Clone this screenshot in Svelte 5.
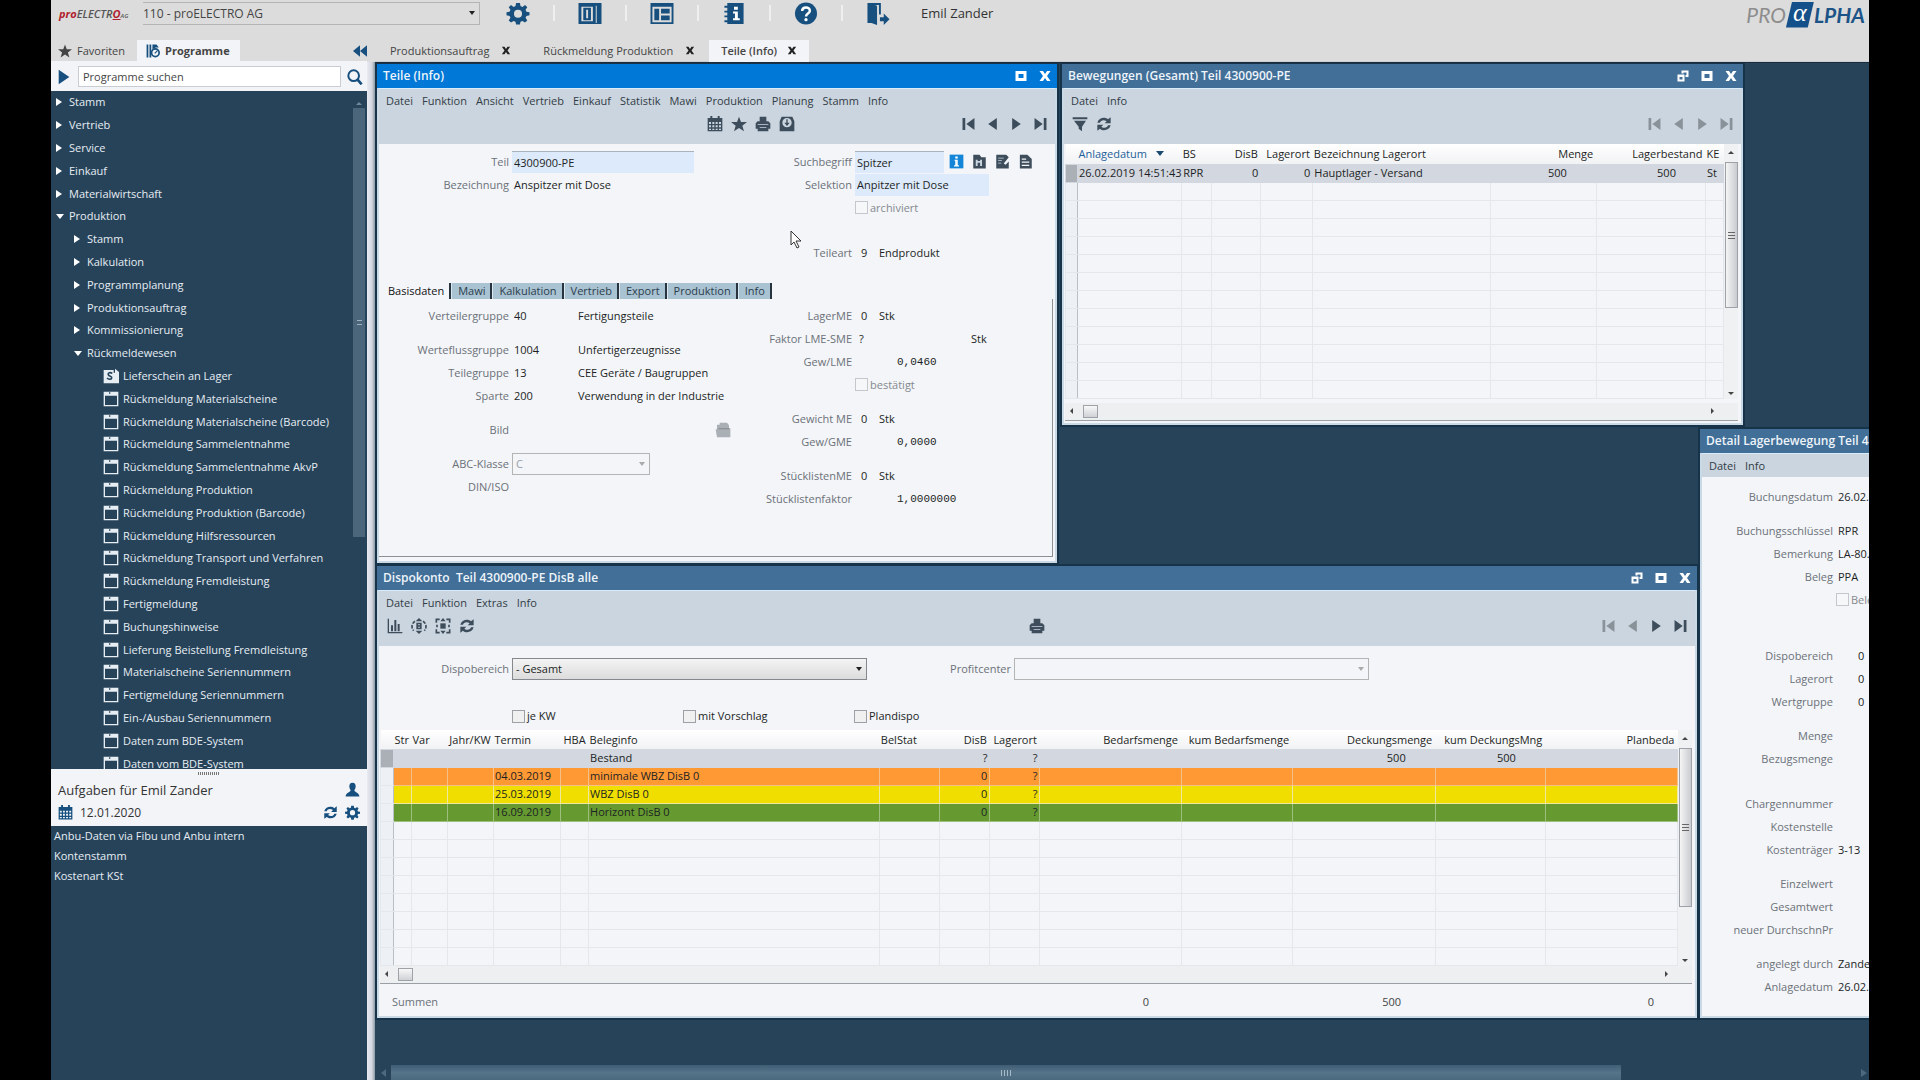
<script>
  const branches = [
    { level: 0, label: 'Stamm' },
    { level: 0, label: 'Vertrieb' },
    { level: 0, label: 'Service' },
    { level: 0, label: 'Einkauf' },
    { level: 0, label: 'Materialwirtschaft' },
    { level: 0, label: 'Produktion', open: true },
    { level: 1, label: 'Stamm' },
    { level: 1, label: 'Kalkulation' },
    { level: 1, label: 'Programmplanung' },
    { level: 1, label: 'Produktionsauftrag' },
    { level: 1, label: 'Kommissionierung' },
    { level: 1, label: 'Rückmeldewesen', open: true }
  ];
  const leaves = [
    'Lieferschein an Lager', 'Rückmeldung Materialscheine', 'Rückmeldung Materialscheine (Barcode)',
    'Rückmeldung Sammelentnahme', 'Rückmeldung Sammelentnahme AkvP', 'Rückmeldung Produktion',
    'Rückmeldung Produktion (Barcode)', 'Rückmeldung Hilfsressourcen', 'Rückmeldung Transport und Verfahren',
    'Rückmeldung Fremdleistung', 'Fertigmeldung', 'Buchungshinweise', 'Lieferung Beistellung Fremdleistung',
    'Materialscheine Seriennummern', 'Fertigmeldung Seriennummern', 'Ein-/Ausbau Seriennummern',
    'Daten zum BDE-System', 'Daten vom BDE-System'
  ];
  const mainTools = [
    ['gear', 'Einstellungen'], ['panel', 'Seitenleiste'], ['layout', 'Layout'],
    ['book', 'Information'], ['help', 'Hilfe'], ['exit', 'Abmelden']
  ];
  const partMenu = ['Datei', 'Funktion', 'Ansicht', 'Vertrieb', 'Einkauf', 'Statistik', 'Mawi', 'Produktion', 'Planung', 'Stamm', 'Info'];
  const partTabs = ['Basisdaten', 'Mawi', 'Kalkulation', 'Vertrieb', 'Export', 'Produktion', 'Info'];

  const moveCols = [
    { w: 12, t: '' }, { w: 104, t: 'Anlagedatum', sort: true }, { w: 30, t: 'BS' }, { w: 49, t: 'DisB', r: true },
    { w: 52, t: 'Lagerort', r: true }, { w: 177, t: 'Bezeichnung Lagerort' }, { w: 106, t: 'Menge', r: true, num: true },
    { w: 109, t: 'Lagerbestand', r: true, num: true }, { w: 18, t: 'KE' }
  ];
  const moveRows = [{ cells: ['', '26.02.2019 14:51:43', 'RPR', '0', '0', 'Hauptlager - Versand', '500', '500', 'St'], tone: 'selected' }];

  const dispoCols = [
    { w: 13, t: '' }, { w: 18, t: 'Str' }, { w: 36, t: 'Var' }, { w: 46, t: 'Jahr/KW', r: true }, { w: 67, t: 'Termin' },
    { w: 28, t: 'HBA', r: true }, { w: 291, t: 'Beleginfo' }, { w: 60, t: 'BelStat' }, { w: 50, t: 'DisB', r: true },
    { w: 50, t: 'Lagerort', r: true }, { w: 141, t: 'Bedarfsmenge', r: true, num: true }, { w: 111, t: 'kum Bedarfsmenge', r: true, num: true },
    { w: 143, t: 'Deckungsmenge', r: true, num: true }, { w: 110, t: 'kum DeckungsMng', r: true, num: true }, { w: 132, t: 'Planbeda', r: true }
  ];
  const dispoRows = [
    { tone: 'selected', cells: ['', '', '', '', '', '', 'Bestand', '', '?', '?', '', '', '500', '500', ''] },
    { tone: 'orange', cells: ['', '', '', '', '04.03.2019', '', 'minimale WBZ DisB 0', '', '0', '?', '', '', '', '', ''] },
    { tone: 'yellow', cells: ['', '', '', '', '25.03.2019', '', 'WBZ DisB 0', '', '0', '?', '', '', '', '', ''] },
    { tone: 'green', cells: ['', '', '', '', '16.09.2019', '', 'Horizont DisB 0', '', '0', '?', '', '', '', '', ''] }
  ];

  const detail = [
    [['Buchungsdatum', '26.02.2019']],
    [['Buchungsschlüssel', 'RPR'], ['Bemerkung', 'LA-80.'], ['Beleg', 'PPA'], ['', 'check']],
    [['Dispobereich', '0', true], ['Lagerort', '0', true], ['Wertgruppe', '0', true]],
    [['Menge', ''], ['Bezugsmenge', '']],
    [['Chargennummer', ''], ['Kostenstelle', ''], ['Kostenträger', '3-13']],
    [['Einzelwert', ''], ['Gesamtwert', ''], ['neuer DurchschnPr', '']],
    [['angelegt durch', 'Zander'], ['Anlagedatum', '26.02.2019']]
  ];
  const detailGap = ['', 'g11', 'g33', 'g11', 'g22', 'g11', 'g11'];
</script>

{#snippet icon(name)}
  <svg class="ic" viewBox="0 0 24 24" aria-hidden="true">
    {#if name === 'gear'}
      <path fill-rule="evenodd" d="M10 1h4l.6 3.2 2 .9L19.400 3.200l2.300 2.300-1.800 2.700.9 2L24 10.700v3.100l-3.200.7-.9 2 1.800 2.700-2.400 2.300-2.700-1.800-2 .8L14 23.500h-4l-.6-3-2-.8-2.700 1.800-2.400-2.300 1.800-2.700-.9-2L0 13.800v-3.100l3.200-.5.9-2-1.800-2.700 2.400-2.300 2.700 1.900 2-.9zM12 8a4.200 4.200 0 1 0 0 8.400A4.200 4.200 0 0 0 12 8z" />
    {:else if name === 'panel'}
      <path fill-rule="evenodd" d="M0 1h24v22H0zM3 5v15h12V5zM18 4v18h1V4z" /><path fill-rule="evenodd" d="M5 6h8v13H5zM8 8v9h2V8z" />
    {:else if name === 'layout'}
      <path fill-rule="evenodd" d="M0 1h24v22H0zM2 5v16h20V5z" /><path d="M4 7h5v12H4zM11 7h9v5h-9zM11 14h9v5h-9z" />
    {:else if name === 'book'}
      <path d="M5 1h17v22H5zM2 4h5v2H2zM2 9h5v2H2zM2 14h5v2H2zM2 19h5v2H2z" /><path d="M12 5h4v3h-4zM11 10h5v7h2v2h-7v-2h2v-5h-2z" fill="#fff" />
    {:else if name === 'help'}
      <circle cx="12" cy="12" r="11.500" /><path d="M8 9.500C8 4.500 16 4.500 16 9c0 3-4 3-4 6" fill="none" stroke="#fff" stroke-width="2.600" /><circle cx="12" cy="18.500" r="1.700" fill="#fff" />
    {:else if name === 'exit'}
      <path d="M1 1h12v2H9v19H1z" /><path d="M3 1l8 3v20l-8-3z" /><path d="M12 1h3v12h-2V3h-4z" /><path d="M14 16h4v-4l6 6-6 6v-4h-4z" />
    {:else if name === 'star'}
      <path d="M12 1l3 8h9l-7 5.500 2.500 8.500L12 18l-7.500 5L7 14.500 0 9h9z" />
    {:else if name === 'programs'}
      <path d="M1 1h3v22H1zM6 1h3v22H6z" /><circle cx="16" cy="15" r="6.500" fill="none" stroke="currentColor" stroke-width="3" /><path d="M11 1h7l4 5h-5l-6 3z" /><path d="M15 16l5-5" stroke="currentColor" stroke-width="2" />
    {:else if name === 'play'}
      <path d="M4 1l16 11L4 23z" />
    {:else if name === 'back'}
      <path d="M20 1L4 12l16 11z" />
    {:else if name === 'first'}
      <path d="M1 1h5v22H1zM23 1L8 12l15 11z" />
    {:else if name === 'last'}
      <path d="M18 1h5v22h-5zM1 1l15 11L1 23z" />
    {:else if name === 'collapse'}
      <path d="M12 2v20L0 12zM24 2v20L12 12z" />
    {:else if name === 'search'}
      <circle cx="10" cy="10" r="8" fill="none" stroke="currentColor" stroke-width="3" /><path d="M15 15l7 8" stroke="currentColor" stroke-width="4" />
    {:else if name === 'calendar'}
      <path fill-rule="evenodd" d="M1 3h4V0h3v3h8V0h3v3h4v20H1zM3 9v3h3V9zm5 0v3h3V9zm5 0v3h3V9zm5 0v3h3V9zM3 14v3h3v-3zm5 0v3h3v-3zm5 0v3h3v-3zm5 0v3h3v-3zM3 19v2h3v-2zm5 0v2h3v-2zm5 0v2h3v-2zm5 0v2h3v-2z" />
    {:else if name === 'printer'}
      <path d="M7 1h10v7h3l3 3v8h-3v4H4v-4H1v-8l3-3h3z" /><path d="M4 12h16v1H4zM7 17h10v1H7z" fill="#cad5df" />
    {:else if name === 'safe'}
      <path fill-rule="evenodd" d="M4 1h16l3 7v15H1V8zM12 3a7 7 0 1 0 0 14 7 7 0 0 0 0-14z" /><path d="M11 5h2v5h3l-4 5-4-5h3z" />
    {:else if name === 'filter'}
      <path d="M1 2h22v3H1zM3 7h18l-6 9v7l-5-4v-3z" />
    {:else if name === 'refresh'}
      <path d="M2 10C4 2 14 1 18 5l4-3v9h-9l3-3C12 5 7 6 6 10zM22 14c-2 8-12 9-16 5l-4 3v-9h9l-3 3c4 3 9 2 10-2z" />
    {:else if name === 'chart'}
      <path d="M1 1h2v20h20v2H1zM6 11h3v9H6zM11 3h3v17h-3zM16 9h3v11h-3z" />
    {:else if name === 'target'}
      <path fill-rule="evenodd" d="M8 7h8v10H8zM11 9v2h2V9zm0 4v2h2v-2z" /><path d="M12 0l5 5H7zM12 24l5-5H7z" /><path d="M6 5a9 9 0 0 0-2 14M18 5a9 9 0 0 1 2 14" fill="none" stroke="currentColor" stroke-width="2.500" stroke-dasharray="5 2" />
    {:else if name === 'spread'}
      <path d="M8 8h8v8H8z" /><path d="M12 0l4 5H8zM12 24l4-5H8z" /><path d="M2 7V2h5M17 2h5v5M2 17v5h5M17 22h5v-5M3 10v4M21 10v4" fill="none" stroke="currentColor" stroke-width="2.500" />
    {:else if name === 'person'}
      <path d="M12 1c4 0 5.500 3 5 7-.4 3-1.500 4-2 5 0 3 8 4 8 10H1c0-6 8-7 8-10-.5-1-1.600-2-2-5-.5-4 1-7 5-7z" />
    {:else if name === 'info'}
      <path d="M1 1h22v22H1z" /><path d="M10 4h4v3h-4zM9 9h5v9h2v2H8v-2h2v-7H9z" fill="#fff" />
    {:else if name === 'find'}
      <path d="M2 1h10l3 4h7v18H2z" /><path d="M6 9h3v10H6zM13 9h3v10h-3zM9 11h4v3H9z" fill="#cad5df" />
    {:else if name === 'edit'}
      <path d="M2 1h16l4 4-8 10 3 2 5-5v11H2z" /><path d="M5 6h9v1H5zM5 10h6v1H5zM5 14h5v1H5z" fill="#cad5df" />
    {:else if name === 'doc'}
      <path d="M3 1h12l7 7v15H3z" /><path d="M6 7h7v2H6zM6 12h12v2H6zM6 17h12v2H6z" fill="#f3f5f9" />
    {:else if name === 'folder'}
      <path d="M3 4h4V1h11l3 4v4h2v14H3L1 11h2z" opacity=".7" /><path d="M5 9h16v2H5z" />
    {:else if name === 'window'}
      <path fill-rule="evenodd" d="M1 1h22v22H1zM3 7v14h18V7z" /><path d="M9 2h2v2H9z" fill="#26435a" />
    {:else if name === 'scan'}
      <path d="M1 3h15v4h2V1l6 5v17H1z" /><path d="M14 8c-3-2-7-1-6 2s6 2 5 5-5 2-7 0" fill="none" stroke="#26435a" stroke-width="2.500" />
    {:else if name === 'restore'}
      <path fill-rule="evenodd" d="M1 9h14v14H1zM5 14v5h6v-5z" /><path d="M9 1h14v13h-6v-4h2V5h-6v2H9z" />
    {:else if name === 'maximize'}
      <path fill-rule="evenodd" d="M1 2h22v20H1zM7 8v8h10V8z" />
    {:else if name === 'close'}
      <path d="M1 2h7l4 6 4-6h7l-7 10 7 10h-7l-4-6-4 6H1l7-10z" />
    {/if}
  </svg>
{/snippet}

{#snippet ib(name, label, extra = '')}
  <button type="button" class="ib {extra}" aria-label={label}>{@render icon(name)}</button>
{/snippet}

{#snippet titlebar(text, restore)}
  <header class="title">
    <h2>{text}</h2>
    {#if restore}{@render ib('restore', 'Lösen')}{/if}
    {@render ib('maximize', 'Maximieren')}
    {@render ib('close', 'Schließen')}
  </header>
{/snippet}

{#snippet menubar(items)}
  <nav class="menu">
    {#each items as item}<button type="button">{item}</button>{/each}
  </nav>
{/snippet}

{#snippet navset(a, b)}
  <div class="tools nav">
    {@render ib('first', 'Erster', a)}{@render ib('back', 'Zurück', a)}{@render ib('play', 'Weiter', b)}{@render ib('last', 'Letzter', b)}
  </div>
{/snippet}

{#snippet grid(cols, rows, empty)}
  <table>
    <colgroup>{#each cols as c}<col style="width:{c.w}px" />{/each}</colgroup>
    <thead>
      <tr>{#each cols as c}<th class:r={c.r} class:sort={c.sort}>{c.t}{#if c.sort}<span class="caret"></span>{/if}</th>{/each}</tr>
    </thead>
    <tbody>
      {#each rows as row}
        <tr class={row.tone}>{#each row.cells as cell, i}<td class:r={cols[i].r} class:num={cols[i].num}>{cell}</td>{/each}</tr>
      {/each}
      {#each Array(empty) as _}
        <tr>{#each cols as c}<td></td>{/each}</tr>
      {/each}
    </tbody>
  </table>
{/snippet}

{#snippet gridframe(cols, rows, empty)}
  <div class="gridframe">
    <div class="gridbody">
      {@render grid(cols, rows, empty)}
      <div class="vbar"><i class="tri up"></i><span class="thumb"><b></b></span><i class="tri down"></i></div>
    </div>
    <div class="hbar"><i class="tri left"></i><span class="thumb"></span><i class="tri right"></i></div>
  </div>
{/snippet}

<div class="screen">
  <div class="app">
    <header class="topbar">
      <div class="brand"><span>pro</span>ELECTR<em>O</em><small>AG</small></div>
      <label class="company combo"><select aria-label="Firma"><option>110 - proELECTRO AG</option></select></label>
      <div class="maintools">
        {#each mainTools as [name, label]}
          {@render ib(name, label, 'big')}
        {/each}
      </div>
      <span class="user">Emil Zander</span>
      <div class="alpha"><span>PRO</span><b>α</b><strong>LPHA</strong></div>
    </header>

    <div class="body">
      <aside class="side">
        <div class="sidetabs">
          <button type="button" class="fav">{@render icon('star')}Favoriten</button>
          <button type="button" class="active">{@render icon('programs')}Programme</button>
          {@render ib('collapse', 'Einklappen')}
        </div>
        <form class="search">
          {@render ib('play', 'Starten')}
          <input type="text" aria-label="Programme suchen" placeholder="Programme suchen" />
          {@render ib('search', 'Suchen')}
        </form>
        <div class="treebox">
          <ul class="tree">
            {#each branches as b}
              <li class="l{b.level}"><button type="button"><i class="tri {b.open ? 'down' : 'right'}"></i>{b.label}</button></li>
            {/each}
            {#each leaves as leaf, i}
              <li class="l2"><button type="button">{@render icon(i === 0 ? 'scan' : 'window')}{leaf}</button></li>
            {/each}
          </ul>
          <div class="sidebar"><i class="tri up"></i><span><b></b></span></div>
        </div>
        <section class="tasks">
          <div class="dots"></div>
          <div class="line"><h2>Aufgaben für Emil Zander</h2>{@render ib('person', 'Benutzer')}</div>
          <div class="line">{@render icon('calendar')}<time>12.01.2020</time>{@render ib('refresh', 'Aktualisieren')}{@render ib('gear', 'Einstellungen')}</div>
        </section>
        <ul class="tasklist">
          <li><a href="#anbu">Anbu-Daten via Fibu und Anbu intern</a></li>
          <li><a href="#konten">Kontenstamm</a></li>
          <li><a href="#kosten">Kostenart KSt</a></li>
        </ul>
      </aside>
      <div class="splitter"></div>

      <div class="work">
        <nav class="doctabs">
          <div class="first">Produktionsauftrag{@render ib('close', 'Schließen')}</div>
          <div>Rückmeldung Produktion{@render ib('close', 'Schließen')}</div>
          <div class="active">Teile (Info){@render ib('close', 'Schließen')}</div>
        </nav>

        <main class="desktop">
          <section class="win part">
            {@render titlebar('Teile (Info)', false)}
            <div class="bar">
              {@render menubar(partMenu)}
              <div class="toolrow">
                <div class="tools shifted">{@render ib('calendar', 'Kalender')}{@render ib('star', 'Favorit')}{@render ib('printer', 'Drucken')}{@render ib('safe', 'Ablage')}</div>
                {@render navset('', '')}
              </div>
            </div>
            <div class="form head">
              <div class="col">
                <div class="row"><label for="teil">Teil</label><input id="teil" class="hl long" value="4300900-PE" /></div>
                <div class="row"><label for="bez">Bezeichnung</label><output id="bez" class="val">Anspitzer mit Dose</output></div>
              </div>
              <div class="col right">
                <div class="row"><label for="such">Suchbegriff</label><input id="such" class="hl short" value="Spitzer" />
                  <span class="rowicons">{@render ib('info', 'Info', 'blue')}{@render ib('find', 'Suchen')}{@render ib('edit', 'Bearbeiten')}{@render ib('doc', 'Dokument')}</span>
                </div>
                <div class="row"><label for="sel">Selektion</label><input id="sel" class="hl mid" value="Anpitzer mit Dose" /></div>
                <div class="row"><span class="lab"></span><label class="check off"><input type="checkbox" disabled />archiviert</label></div>
                <div class="row g22"><span class="lab">Teileart</span><span class="key">9</span><span>Endprodukt</span></div>
              </div>
            </div>
            <div class="tabs">
              {#each partTabs as t, i}<button type="button" class:on={i === 0}>{t}</button>{/each}
            </div>
            <div class="form base">
              <div class="col">
                <div class="row"><span class="lab">Verteilergruppe</span><span class="code">40</span><span>Fertigungsteile</span></div>
                <div class="row g11"><span class="lab">Werteflussgruppe</span><span class="code">1004</span><span>Unfertigerzeugnisse</span></div>
                <div class="row"><span class="lab">Teilegruppe</span><span class="code">13</span><span>CEE Geräte / Baugruppen</span></div>
                <div class="row"><span class="lab">Sparte</span><span class="code">200</span><span>Verwendung in der Industrie</span></div>
                <div class="row g11"><span class="lab">Bild</span><span class="picture">{@render ib('folder', 'Bild öffnen', 'dim')}</span></div>
                <div class="row g11"><label for="abc">ABC-Klasse</label><span class="combo off abc"><select id="abc" disabled><option>C</option></select></span></div>
                <div class="row"><span class="lab">DIN/ISO</span></div>
              </div>
              <div class="col right">
                <div class="row"><span class="lab">LagerME</span><span class="key">0</span><span>Stk</span></div>
                <div class="row"><span class="lab">Faktor LME-SME</span><span class="factor">?</span><span>Stk</span></div>
                <div class="row"><span class="lab">Gew/LME</span><span class="mono">0,0460</span></div>
                <div class="row"><span class="lab"></span><label class="check off"><input type="checkbox" disabled />bestätigt</label></div>
                <div class="row g11"><span class="lab">Gewicht ME</span><span class="key">0</span><span>Stk</span></div>
                <div class="row"><span class="lab">Gew/GME</span><span class="mono">0,0000</span></div>
                <div class="row g11"><span class="lab">StücklistenME</span><span class="key">0</span><span>Stk</span></div>
                <div class="row"><span class="lab">Stücklistenfaktor</span><span class="mono">1,0000000</span></div>
              </div>
            </div>
          </section>

          <section class="win moves">
            {@render titlebar('Bewegungen (Gesamt) Teil 4300900-PE', true)}
            <div class="bar">
              {@render menubar(['Datei', 'Info'])}
              <div class="toolrow">
                <div class="tools">{@render ib('filter', 'Filter')}{@render ib('refresh', 'Aktualisieren')}</div>
                {@render navset('dim', 'dim')}
              </div>
            </div>
            {@render gridframe(moveCols, moveRows, 12)}
          </section>

          <section class="win dispo">
            {@render titlebar('Dispokonto  Teil 4300900-PE DisB alle', true)}
            <div class="bar">
              {@render menubar(['Datei', 'Funktion', 'Extras', 'Info'])}
              <div class="toolrow thirds">
                <div class="tools">{@render ib('chart', 'Diagramm')}{@render ib('target', 'Zentrieren')}{@render ib('spread', 'Ausrichten')}{@render ib('refresh', 'Aktualisieren')}</div>
                <div class="tools">{@render ib('printer', 'Drucken')}</div>
                {@render navset('dim', '')}
              </div>
            </div>
            <div class="filters">
              <label for="bereich">Dispobereich</label><span class="combo strong"><select id="bereich"><option>- Gesamt</option></select></span>
              <label for="profit">Profitcenter</label><span class="combo off"><select id="profit" disabled><option></option></select></span>
            </div>
            <div class="checks">
              <label class="check"><input type="checkbox" />je KW</label>
              <label class="check"><input type="checkbox" />mit Vorschlag</label>
              <label class="check"><input type="checkbox" />Plandispo</label>
            </div>
            {@render gridframe(dispoCols, dispoRows, 8)}
            <footer class="sums"><span>Summen</span><span>0</span><span>500</span><span>0</span></footer>
          </section>

          <section class="win detail">
            <header class="title"><h2>Detail Lagerbewegung Teil 4300900-PE</h2></header>
            <div class="bar">{@render menubar(['Datei', 'Info'])}</div>
            <div class="form">
              <div class="col">
                {#each detail as group, g}
                  {#each group as [name, value, indent], i}
                    <div class="row {i === 0 ? detailGap[g] : ''}">
                      <span class="lab">{name}</span>
                      {#if value === 'check'}<label class="check off"><input type="checkbox" disabled />Beleg</label>
                      {:else}<span class="val" class:indent>{value}</span>{/if}
                    </div>
                  {/each}
                {/each}
              </div>
            </div>
          </section>

          <svg class="cursor" viewBox="0 0 12 19" aria-hidden="true"><path d="M1 1v14l3-3 3 6 2-1-3-6h5z" fill="#fff" stroke="#333" /></svg>
          <div class="deskbar"><i class="tri left"></i><span><b></b></span><i class="tri right"></i></div>
        </main>
      </div>
    </div>
  </div>
</div>

<style>
  :global(body) { background: #000; overflow: hidden; }
  .screen { height: 100vh; padding: 0 51px; background: #000; font: 11px/16px "Open Sans", "Noto Sans", sans-serif; color: #1c1f24; }
  .screen, .screen * { box-sizing: border-box; }
  .app { height: 100%; display: flex; flex-direction: column; background: #dcdcdc; overflow: hidden; }
  button, input, select { font: inherit; color: inherit; border: 0; background: none; margin: 0; padding: 0; }
  h2 { margin: 0; font: inherit; }
  ul { list-style: none; margin: 0; padding: 0; }
  .ic { width: 16px; height: 16px; fill: currentColor; flex: none; display: block; }
  .ib { flex: none; display: block; color: #3e4d5b; }
  .ib.dim { color: #8a9299; }
  .ib.blue { color: #1585d8; }
  .tri { width: 0; height: 0; flex: none; border: 4px solid transparent; }
  .tri.right { border-left: 6px solid currentColor; border-right: 0; }
  .tri.left { border-right: 5px solid currentColor; border-left: 0; }
  .tri.down { border-top: 5px solid currentColor; border-bottom: 0; }
  .tri.up { border-bottom: 5px solid currentColor; border-top: 0; }

  .topbar { height: 40px; flex: none; display: flex; align-items: flex-start; padding: 0 4px 0 8px; }
  .brand { width: 84px; line-height: 28px; font-size: 11px; font-style: italic; font-weight: 600; color: #555; white-space: nowrap; }
  .brand span { color: #b0202c; font-weight: 700; }
  .brand em { color: #b0202c; font-weight: 700; text-decoration: underline; }
  .brand small { font-size: 6px; }
  .combo { position: relative; display: block; border: 1px solid #b4b4b4; }
  .combo select { appearance: none; width: 100%; height: 100%; display: block; padding: 0 3px; opacity: 1; }
  .combo::after { content: ""; position: absolute; right: 4px; top: 8px; border: 3px solid transparent; border-top: 4px solid #222; border-bottom: 0; pointer-events: none; }
  .combo.off::after { border-top-color: #aaa; }
  .company { width: 337px; height: 23px; margin-top: 2px; border-left: 0; font-size: 12px; color: #444; }
  .company select { padding: 0; }
  .maintools { display: flex; padding: 2px 0 0 26px; }
  .maintools :global(.big) { color: #17507f; width: 24px; margin-right: 48px; position: relative; }
  .maintools :global(.big .ic) { width: 24px; height: 23px; }
  .maintools :global(.big:not(:last-child)::after) { content: ""; position: absolute; left: 47px; top: 3px; width: 2px; height: 16px; background: #efefef; }
  .user { font-size: 13px; line-height: 26px; color: #333; flex: 1; margin-left: -17px; }
  .alpha { display: flex; align-items: center; height: 29px; font: italic 21px/28px Lato, sans-serif; color: #8d8d8d; }
  .alpha b { width: 28px; height: 26px; background: #14508a; color: #fff; clip-path: polygon(22% 0, 100% 0, 78% 100%, 0 100%); text-align: center; font: italic 26px/22px "Liberation Serif", serif; }
  .alpha strong { color: #1c5487; font-weight: 700; }

  .body { flex: 1; display: flex; min-height: 0; }
  .side { width: 316px; flex: none; display: flex; flex-direction: column; background: #26435a; }
  .splitter { width: 8px; flex: none; background: linear-gradient(90deg, #e9ebf2, #d3d7e0 60%, #8e99a6); margin-top: 22px; }
  .sidetabs { height: 22px; flex: none; display: flex; align-items: center; background: #dcdcdc; border-bottom: 1px solid #f3f4f8; padding-left: 7px; color: #444; }
  .sidetabs > button { display: flex; align-items: center; gap: 5px; height: 21px; }
  .sidetabs > button .ic { width: 14px; height: 14px; }
  .fav { width: 79px; }
  .sidetabs > .active { background: #f3f4f8; width: 103px; padding-left: 9px; font-weight: 700; }
  .sidetabs > .active .ic { color: #17507f; }
  .sidetabs > :global(.ib) { margin-left: auto; color: #17507f; }
  .search { height: 29px; flex: none; display: flex; align-items: center; background: #f3f4f8; padding: 0 4px 0 5px; gap: 6px; }
  .search input { flex: 1; height: 21px; border: 1px solid #c9ccd2; background: #fff; padding: 0 4px; min-width: 0; }
  .search input::placeholder { color: #444; opacity: 1; }
  .search :global(.ib) { color: #17507f; }
  .treebox { height: 678px; flex: none; display: flex; overflow: hidden; }
  .tree { flex: 1; height: 684px; display: grid; grid-auto-rows: 1fr; color: #e6edf3; }
  .tree li { display: flex; align-items: center; white-space: nowrap; }
  .tree button { display: flex; align-items: center; gap: 4px; }
  .tree .l0 { padding-left: 5px; }
  .tree .l1 { padding-left: 23px; }
  .tree .l2 { padding-left: 52px; }
  .tree .tri { width: 8px; margin-right: 1px; color: #fff; }
  .tree .tri.right { width: 6px; margin-right: 3px; }
  .sidebar { width: 14px; padding-top: 11px; color: #6f8799; }
  .sidebar .tri { display: block; border-width: 3px; margin: 0 3px 3px; }
  .sidebar .tri.up { border-top-width: 0; }
  .sidebar span { display: grid; place-items: center; width: 12px; height: 429px; background: #4b657a; }
  .sidebar b { width: 5px; height: 5px; border: solid #9fb0be; border-width: 1px 0; }
  .tasks { height: 57px; flex: none; background: #f2f4f8; padding: 3px 7px 0; color: #333; font-size: 13px; }
  .dots { width: 22px; height: 3px; margin: 0 auto 2px; background: repeating-linear-gradient(90deg, #777 0 1px, transparent 1px 2px); }
  .line { display: flex; align-items: center; height: 23px; gap: 7px; color: #17507f; padding-top: 2px; }
  .line h2, .line time { flex: 1; color: #333; }
  .line time { font-size: 12px; }
  .line .ic { width: 15px; height: 15px; }
  .line :global(.ib) { color: #17507f; }
  .tasklist { padding-left: 3px; }
  .tasklist li { height: 20px; line-height: 20px; }
  .tasklist a { color: #e6edf3; text-decoration: none; }

  .work { flex: 1; min-width: 0; display: flex; flex-direction: column; }
  .doctabs { height: 22px; flex: none; display: flex; align-items: center; border-bottom: 1px solid #c9ced8; padding-left: 3px; color: #444; }
  .doctabs div { display: flex; align-items: center; height: 22px; gap: 12px; padding: 0 12px; }
  .doctabs .first { margin-right: 8px; }
  .doctabs .ic { width: 10px; height: 9px; color: #222; }
  .doctabs .active { background: #f3f4f8; font-weight: 600; gap: 10px; margin-left: 2px; }
  .desktop { flex: 1; position: relative; overflow: hidden; background: #26435a; border-top: 1px solid #1b2c3c; }

  .win { position: absolute; background: #f3f5f9; border: 2px solid #c9d9e6; border-top: 0; outline: 2px solid #17334a; display: flex; flex-direction: column; }
  .part { left: 2px; top: 1px; width: 680px; height: 499px; }
  .moves { left: 687px; top: 1px; width: 681px; height: 361px; }
  .dispo { left: 2px; top: 503px; width: 1320px; height: 452px; }
  .detail { left: 1325px; top: 366px; width: 340px; height: 589px; }
  .title { height: 24px; flex: none; display: flex; align-items: center; gap: 12px; margin: 0 -2px; padding: 0 6px; background: #416f98; color: #eef4fa; font-size: 12px; font-weight: 600; white-space: pre; }
  .part .title { background: #0078d7; }
  .title h2 { flex: 1; }
  .title .ic { width: 12px; height: 12px; color: #fff; }
  .bar { flex: none; background: #cad5df; border-top: 1px solid #d9ecfb; }
  .menu { display: flex; height: 23px; align-items: center; gap: 9px; padding-left: 7px; color: #333c45; }
  .menu button { height: 16px; }
  .toolrow { display: flex; justify-content: space-between; align-items: center; height: 24px; padding: 0 8px; margin-bottom: 8px; }
  .thirds { display: grid; grid-template-columns: 1fr auto 1fr; }
  .tools { display: flex; gap: 8px; }
  .tools.shifted { padding-left: 320px; }
  .nav { gap: 11px; justify-content: flex-end; }
  .nav .ic { width: 13px; height: 14px; }

  .form { display: flex; }
  .row { display: flex; align-items: center; height: 23px; white-space: nowrap; }
  .row > * { flex: none; }
  .row > label:first-child, .row > .lab { width: 130px; text-align: right; margin-right: 3px; color: #6c7178; }
  .row.g11 { margin-top: 11px; }
  .row.g22 { margin-top: 22px; }
  .row.g33 { margin-top: 33px; }
  .part .right .row > label:first-child, .part .right .row > .lab { width: 148px; }
  .head { padding-top: 6px; height: 139px; }
  .part .col:first-child { width: 342px; flex: none; }
  .part .col.right { margin-left: -17px; }
  .hl { background: #dceafb; height: 22px; padding: 0 2px; }
  .long { width: 182px; border-top: 1px solid #a9b3be; }
  .short { width: 89px; border-top: 1px solid #a9b3be; }
  .mid { width: 134px; }
  .rowicons { display: flex; gap: 8px; padding-left: 5px; }
  .rowicons .ic { width: 15px; height: 15px; }
  .val { padding-left: 2px; }
  .key { width: 24px; padding-left: 6px; }
  .code { width: 66px; padding-left: 2px; }
  .factor { width: 116px; padding-left: 4px; }
  .picture { padding-left: 203px; }
  .mono { font-family: "Liberation Mono", monospace; padding-left: 42px; }
  .abc { width: 138px; height: 22px; color: #9aa0a6; }
  .check { display: flex; align-items: center; gap: 2px; }
  .check input { appearance: none; width: 13px; height: 13px; border: 1px solid #9da1a6; background: #f0f0f0; }
  .check.off { color: #85898e; }
  .check.off input { border-color: #c4c7cb; background: #f6f7f9; }
  .tabs { display: flex; height: 16px; flex: none; }
  .tabs button { height: 16px; padding: 0 5px 0 6px; background: #a9c3d3; border-right: 2px solid #27333e; border-left: 1px solid #dce8ef; color: #2c3d4b; }
  .tabs .on { background: none; padding: 0 5px 0 9px; color: #111; border-left: 0; }
  .base { flex: 1; padding-top: 5px; border-right: 1px solid #8a9096; border-bottom: 1px solid #8a9096; margin: 0 2px 4px 0; }

  .gridframe { margin: 0 3px 0 1px; border-bottom: 1px solid #9aa0a6; }
  .gridbody { display: flex; }
  table { flex: 1; table-layout: fixed; border-collapse: collapse; width: 0; }
  th { height: 19px; padding: 0 1px; font-weight: 400; text-align: left; background: linear-gradient(#fff, #f1f2f4); white-space: nowrap; line-height: 17px; }
  .moves th { height: 20px; }
  th.r { text-align: right; padding-right: 3px; }
  th.sort { color: #1d5f9a; }
  .caret { display: inline-block; border: 4px solid transparent; border-top: 5px solid #1d4a70; border-bottom: 0; margin-left: 9px; vertical-align: 2px; }
  td { height: 18px; padding: 0 1px; line-height: 16px; border: 1px solid #e4e7eb; white-space: nowrap; }
  td:first-child { border-right-color: #b9bfc5; background: #edf1f5; }
  td.r { text-align: right; padding-right: 2px; }
  td.num { padding-right: 29px; }
  .selected td { background: #d3d7df; border-color: #d3d7df; }
  .selected td:first-child { background: #aab0b6; }
  .orange td:not(:first-child) { background: #ff9933; border-color: #f3c08a; border-top-color: #ff9933; }
  .yellow td:not(:first-child) { background: #efde00; border-color: #f0e8a0; }
  .green td:not(:first-child) { background: #669a30; border-color: #9dbf7c; }
  .vbar { width: 14px; flex: none; display: flex; flex-direction: column; align-items: center; background: #f0f1f3; padding: 7px 0 4px; color: #444; }
  .vbar .tri, .hbar .tri { border-width: 3px; }
  .vbar .thumb { width: 13px; margin-top: 8px; display: grid; place-items: center; height: 146px; background: linear-gradient(90deg, #f5f5f5, #c9cbd0); border: 1px solid #9ea2a8; }
  .dispo .vbar .thumb { height: 159px; }
  .thumb b { width: 7px; height: 7px; background: repeating-linear-gradient(#666 0 1px, transparent 1px 3px); }
  .vbar .down { margin-top: auto; }
  .hbar { height: 17px; display: flex; align-items: center; padding: 0 24px 0 5px; background: #eeeff1; color: #444; }
  .moves .hbar { margin-top: 4px; }
  .hbar .thumb { width: 15px; height: 13px; margin-left: 10px; background: linear-gradient(#f8f8f8, #cfd1d5); border: 1px solid #9ea2a8; }
  .hbar .right { margin-left: auto; }
  .filters { display: grid; grid-template-columns: 130px 355px 141px 355px; column-gap: 3px; align-items: center; padding-top: 12px; }
  .filters label { text-align: right; color: #6c7178; }
  .filters .combo { height: 22px; }
  .strong { background: linear-gradient(#f4f4f4, #dcdcdc); border-color: #85898e; }
  .checks { display: grid; grid-template-columns: 171px 171px 171px; padding: 28px 0 5px 133px; height: 50px; align-items: start; }
  .sums { flex: 1; display: grid; align-items: center; grid-template-columns: 400px 370px 252px 253px; text-align: right; color: #444; padding-top: 5px; }
  .sums span:first-child { text-align: left; padding-left: 13px; color: #6c7178; }
  .detail .form { padding-top: 8px; }
  .detail .row > .lab { width: 131px; }
  .val.indent { padding-left: 22px; }

  .cursor { position: absolute; left: 415px; top: 167px; width: 12px; height: 19px; }
  .deskbar { position: absolute; left: 6px; right: 2px; bottom: 0; height: 15px; display: flex; align-items: center; color: #4b6a80; }
  .deskbar span { flex: 1; height: 15px; background: linear-gradient(#3f5e75, #557489 50%, #4a687e); margin: 0 240px 0 5px; display: grid; place-items: center; }
  .deskbar b { width: 11px; height: 6px; background: repeating-linear-gradient(90deg, #a9bac7 0 1px, transparent 1px 3px); }
</style>
